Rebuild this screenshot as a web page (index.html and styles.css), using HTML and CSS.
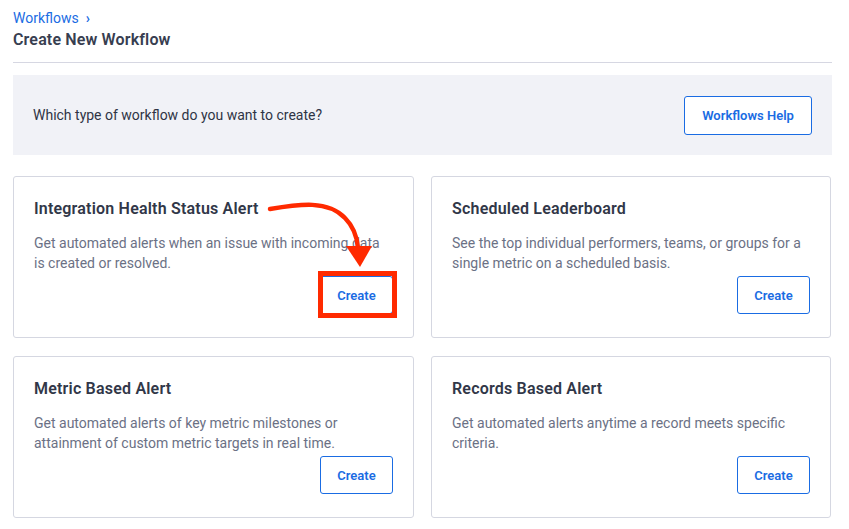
FILE: index.html
```html
<!DOCTYPE html>
<html lang="en">
<head>
<meta charset="utf-8">
<title>Create New Workflow</title>
<link rel="stylesheet" href="styles.css">
</head>
<body>
<div class="page">
  <nav class="crumbs"><a class="crumb-link" href="#">Workflows</a><span class="crumb-sep">›</span></nav>
  <h1 class="page-title">Create New Workflow</h1>
  <hr class="divider">
  <section class="intro">
    <p class="intro-text">Which type of workflow do you want to create?</p>
    <button class="btn btn-help">Workflows Help</button>
  </section>
  <div class="grid">
    <div class="card card-annotated">
      <h2 class="card-title">Integration Health Status Alert</h2>
      <p class="card-desc">Get automated alerts when an issue with incoming data is created or resolved.</p>
      <div class="card-actions"><button class="btn btn-create btn-highlight">Create</button></div>
      <svg class="arrow" width="401" height="162" viewBox="0 0 401 162" xmlns="http://www.w3.org/2000/svg">
        <path d="M257 33 C 287 28, 315 24, 332 42 C 340 50, 344 60, 345 72" fill="none" stroke="#ff2a00" stroke-width="4.5" stroke-linecap="round"/>
        <polygon points="333,70 359,70 347,91" fill="#ff2a00"/>
      </svg>
    </div>
    <div class="card">
      <h2 class="card-title">Scheduled Leaderboard</h2>
      <p class="card-desc">See the top individual performers, teams, or groups for a single metric on a scheduled basis.</p>
      <div class="card-actions"><button class="btn btn-create">Create</button></div>
    </div>
    <div class="card">
      <h2 class="card-title">Metric Based Alert</h2>
      <p class="card-desc">Get automated alerts of key metric milestones or attainment of custom metric targets in real time.</p>
      <div class="card-actions"><button class="btn btn-create">Create</button></div>
    </div>
    <div class="card">
      <h2 class="card-title">Records Based Alert</h2>
      <p class="card-desc">Get automated alerts anytime a record meets specific criteria.</p>
      <div class="card-actions"><button class="btn btn-create">Create</button></div>
    </div>
  </div>
</div>
</body>
</html>
```
FILE: styles.css
```css
* { box-sizing: border-box; }
html, body { margin: 0; padding: 0; background: #ffffff; }
body {
  font-family: Roboto, "Liberation Sans", Arial, sans-serif;
  color: #333a4d;
}
.page {
  padding: 8px 17px 0 13px;
}
.crumbs {
  display: flex;
  align-items: center;
  gap: 7px;
  height: 20px;
  font-size: 14px;
}
.crumb-link {
  color: #1a6ce3;
  text-decoration: none;
}
.crumb-sep {
  color: #1a6ce3;
  font-size: 14px;
  font-weight: 700;
}
.page-title {
  margin: 2px 0 0;
  font-size: 16px;
  line-height: 20px;
  font-weight: 600;
  letter-spacing: 0.15px;
  color: #373e50;
}
.divider {
  margin: 12px 0 0;
  border: 0;
  border-top: 1px solid #d6d7e2;
  height: 0;
}
.intro {
  margin-top: 12px;
  height: 80px;
  background: #f1f2f7;
  display: flex;
  align-items: center;
  justify-content: space-between;
  padding: 0 20px 0 20px;
}
.intro-text {
  margin: 0;
  font-size: 14px;
  color: #2f3445;
}
.btn {
  font-family: inherit;
  background: #ffffff;
  border: 1px solid #1a6ce3;
  border-radius: 3px;
  color: #1a6ce3;
  font-size: 13px;
  font-weight: 600;
  height: 39px;
  padding: 0 16px;
  cursor: pointer;
}
.btn-help {
  width: 128px;
  padding: 0;
}
.grid {
  margin-top: 21px;
  display: grid;
  grid-template-columns: 401px 400px;
  column-gap: 17px;
  row-gap: 18px;
}
.card {
  position: relative;
  height: 162px;
  border: 1px solid #d5d7e1;
  border-radius: 3px;
  padding: 21px 20px 0 20px;
  display: flex;
  flex-direction: column;
}
.card-title {
  margin: 0;
  font-size: 16px;
  line-height: 22px;
  font-weight: 600;
  letter-spacing: 0.2px;
  color: #313748;
}
.card-desc {
  margin: 13px 0 0;
  font-size: 14px;
  line-height: 20px;
  color: #6b7185;
  height: 40px;
}
.card-actions {
  margin-top: 3px;
  display: flex;
  justify-content: flex-end;
}
.btn-create {
  width: 73px;
  height: 38px;
  padding: 0;
}
.btn-highlight {
  position: relative;
}
.btn-highlight::after {
  content: "";
  position: absolute;
  top: -6px;
  left: -3px;
  right: -5px;
  bottom: -5px;
  border: 5px solid #ff2a00;
}
.arrow {
  position: absolute;
  left: -1px;
  top: -1px;
  pointer-events: none;
}
```
